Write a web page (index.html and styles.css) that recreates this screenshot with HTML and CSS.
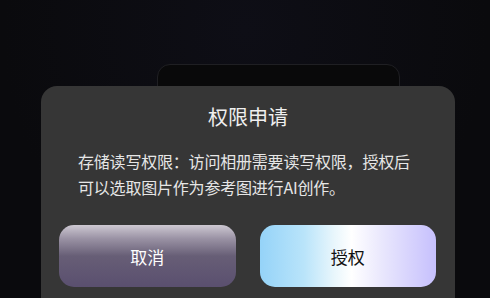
FILE: index.html
```html
<!DOCTYPE html>
<html lang="zh-CN">

<head>
  <meta charset="UTF-8">
  <meta name="viewport" content="width=device-width, initial-scale=1.0">
  <title>权限申请</title>
  <link rel="stylesheet" href="styles.css">
</head>

<body>
  <div class="page">
    <div class="card"></div>
  </div>

  <div class="dialog">
    <h2 class="dialog-title">权限申请</h2>
    <p class="dialog-text">存储读写权限：访问相册需要读写权限，授权后可以选取图片作为参考图进行AI创作。</p>
    <div class="dialog-actions">
      <button class="btn btn-cancel">取消</button>
      <button class="btn btn-ok">授权</button>
    </div>
  </div>
</body>

</html>
```

FILE: styles.css
```css
body {
  font-family: "Noto Sans CJK SC", "Noto Sans", sans-serif;
  margin: 0;
  height: 298px;
  overflow: hidden;
  background: radial-gradient(ellipse at 50% 10%, #0e0e16, #0a0a0d 70%);
}

.page {
  padding-top: 64px;
}

.card {
  width: 241px;
  height: 120px;
  margin-left: 157px;
  background-color: #09090a;
  border: 1px solid #1f1f23;
  border-radius: 13px;
}

/* popup */
.dialog {
  position: fixed;
  left: 41px;
  top: 86px;
  width: 414px;
  height: 240px;
  box-sizing: border-box;
  padding: 17px 19px 0 18px;
  background-color: #363636;
  border-radius: 16px;
  color: #efefef;
}

.dialog-title {
  margin: 0;
  font-size: 20px;
  font-weight: normal;
  line-height: 28px;
  text-align: center;
  padding-left: 1px;
}

.dialog-text {
  margin: 17px 18px 0 19px;
  font-size: 16px;
  line-height: 26px;
  color: #e6e6e6;
  letter-spacing: -0.2px;
}

.dialog-actions {
  display: flex;
  gap: 24px;
  margin-top: 25px;
}

.btn {
  flex: 1;
  height: 62px;
  border: none;
  border-radius: 15px;
  font-family: inherit;
  font-size: 17px;
  cursor: pointer;
}

.btn-cancel {
  color: #fff;
  background: linear-gradient(180deg, #cdc8d2 0%, #9a92a4 22%, #675e76 50%, #5a4f6f 100%);
}

.btn-ok {
  color: #111;
  background: linear-gradient(90deg, #95d3f8 0%, #b9e4fa 25%, #e8f6fc 42%, #ffffff 52%, #ebe9fd 68%, #c6c0fd 100%);
}
```
